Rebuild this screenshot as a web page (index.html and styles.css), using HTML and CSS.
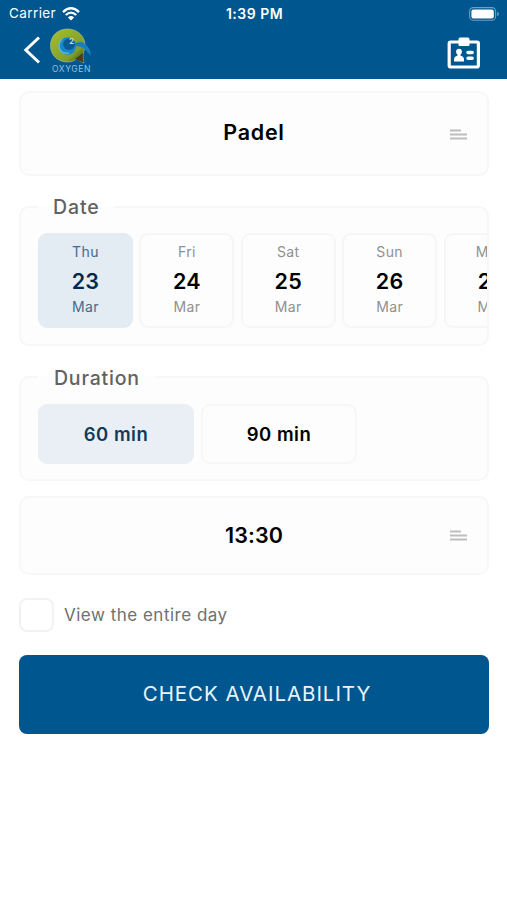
FILE: index.html
```html
<!DOCTYPE html>
<html lang="en">
<head>
<meta charset="utf-8">
<meta name="viewport" content="width=device-width, initial-scale=1">
<title>Book a court</title>
<link rel="stylesheet" href="styles.css">
</head>
<body>
<header class="header">
  <div class="status">
    <div class="carrier"><span class="carrier-name">Carrier</span>
      <svg width="18" height="14" viewBox="0 0 18 14" fill="none" stroke="#fff" stroke-width="2.3"><path d="M1 5.1Q9-2.5 17 5.1M3.8 8Q9 3.2 14.2 8"/><path d="M9 13.4L5.9 10.4Q9 7.8 12.1 10.4Z" fill="#fff" stroke="none"/></svg>
    </div>
    <span class="clock">1:39 PM</span>
    <svg class="battery" width="31" height="14" viewBox="0 0 31 14"><rect x=".6" y=".6" width="26" height="12.6" rx="3.8" fill="none" stroke="#6f9fc2" stroke-width="1.1"/><rect x="2.4" y="2.4" width="22.4" height="9" rx="2" fill="#fff"/><path d="M28.2 4.8Q30 5.6 30 7T28.2 9.2Z" fill="#6f9fc2"/></svg>
  </div>
  <div class="nav">
    <svg class="back" width="18" height="30" viewBox="0 0 18 30" fill="none" stroke="#fff" stroke-width="3"><path d="M16 2.5L2.8 15L16 27.5"/></svg>
    <div class="logo">
      <svg width="42" height="37" viewBox="0 0 42 37">
        <defs><linearGradient id="leaf" x1="0" y1="0" x2="1" y2="1"><stop offset="0" stop-color="#a9bd30"/><stop offset=".7" stop-color="#7f9f2b"/><stop offset="1" stop-color="#343f12"/></linearGradient></defs>
        <path d="M17.5 1C7.5 1 .5 8 .5 17.5S7.5 34 17.5 34C21 34 24 33 26.5 31L34 35Q32 28 33.5 24Q35 21 35 17.5C35 8 27.5 1 17.5 1Z" fill="url(#leaf)" stroke="#a7b98d" stroke-width=".7"/>
        <path d="M25 31L33.6 34.6Q32 29 33 25Z" fill="#4b3d1c"/>
        <circle cx="17.5" cy="18" r="8.7" fill="#1687c8"/>
        <path d="M12 11C6 18 10 27 19 25" fill="none" stroke="#5fb5dc" stroke-width="1.5"/>
        <circle cx="19" cy="16.2" r="5.8" fill="#07599a"/>
        <path d="M25 16Q31 11 36 17Q41 21 40.5 28Q36 21 31 19Q28 18 25 18Z" fill="#1680c2"/>
        <text x="21.5" y="16.2" class="logo-number">2</text>
      </svg>
      <span class="logo-name">OXYGEN</span>
    </div>
    <svg class="badge" width="34" height="33" viewBox="0 0 34 33"><rect x="2.2" y="5" width="29.2" height="25" rx="1.5" fill="none" stroke="#fff" stroke-width="3.2"/><path d="M13 0.5H21Q22.5 .5 22.5 2.5V8Q22.5 9 21.5 9H12.5Q11.5 9 11.5 8V2.5Q11.5 .5 13 .5Z" fill="#fff"/><circle cx="12" cy="14.7" r="2.9" fill="#fff"/><path d="M10.5 16H13.5V18.5Q17 19.5 17 22.5V24.5H7V22.5Q7 19.5 10.5 18.5Z" fill="#fff"/><path d="M21 15.5H25.2M21 21.3H25.2" stroke="#fff" stroke-width="3.4" stroke-linecap="round"/></svg>
  </div>
</header>
<main class="form">
  <div class="select sport"><span>Padel</span><svg class="lines" width="17" height="11" viewBox="0 0 17 11"><path d="M0 1.5H11M0 5.5H17M0 9.5H17"/></svg></div>
  <fieldset class="group dates">
    <legend>Date</legend>
    <div class="strip">
      <div class="day selected"><span>Thu</span><b>23</b><span>Mar</span></div>
      <div class="day"><span>Fri</span><b>24</b><span>Mar</span></div>
      <div class="day"><span>Sat</span><b>25</b><span>Mar</span></div>
      <div class="day"><span>Sun</span><b>26</b><span>Mar</span></div>
      <div class="day"><span>Mon</span><b>27</b><span>Mar</span></div>
    </div>
  </fieldset>
  <fieldset class="group durations">
    <legend>Duration</legend>
    <div class="options"><div class="option selected">60 min</div><div class="option">90 min</div></div>
  </fieldset>
  <div class="select time"><span>13:30</span><svg class="lines" width="17" height="11" viewBox="0 0 17 11"><path d="M0 1.5H11M0 5.5H17M0 9.5H17"/></svg></div>
  <label class="entire"><span class="check"></span><span class="entire-text">View the entire day</span></label>
  <button class="submit">CHECK AVAILABILITY</button>
</main>
</body>
</html>
```

FILE: styles.css
```css
* { box-sizing: border-box; }
body { margin: 0; background: #fff; font-family: Inter, sans-serif; color: #000; }
.header { height: 79px; background: #00568f; color: #fff; }
.status { height: 27px; display: grid; grid-template-columns: 1fr auto 1fr; align-items: center; padding: 0 7px 0 9px; font-size: 13px; }
.carrier { display: flex; align-items: center; gap: 6px; }
.carrier-name { font-size: 13.5px; letter-spacing: .4px; line-height: 27px; }
.clock { font-size: 14px; font-weight: 600; letter-spacing: .5px; }
.battery { justify-self: end; }
.nav { height: 52px; display: flex; align-items: flex-start; padding: 0 26px 0 23px; }
.back { margin-top: 8px; }
.logo { width: 42px; margin: 1px 0 0 9px; display: flex; flex-direction: column; }
.logo-number { font: bold 8px Inter, sans-serif; fill: #d8d99e; text-anchor: middle; }
.logo-name { font-size: 8.5px; line-height: 9px; letter-spacing: .6px; color: #9cc0d9; margin-left: 2px; }
.badge { margin: 10px 0 0 auto; }
.form { display: flex; flex-direction: column; padding: 12px 18px 0 19px; }
.select { border: 2px solid #f7f7f7; border-radius: 10px; background: #fdfdfd; display: grid; grid-template-columns: 1fr auto 1fr; align-items: center; font-size: 21.5px; font-weight: 600; padding: 0 20px; }
.select span { grid-column: 2; }
.sport { height: 85px; letter-spacing: .7px; }
.sport span { margin-bottom: 3px; }
.sport .lines { margin-top: 2px; }
.lines { justify-self: end; fill: none; stroke: #bdbdbd; stroke-width: 1.8; }
.group { min-width: 0; margin: 0; border: 2px solid #f7f7f7; border-radius: 10px; background: #fdfdfd; padding: 0 0 0 17px; }
legend { height: 26px; line-height: 26px; font-size: 19.5px; font-weight: 500; color: #626262; letter-spacing: .9px; padding: 0 15px 0 15px; }
.dates { height: 152px; margin-top: 18px; }
.strip { display: flex; gap: 6.4px; overflow: hidden; margin-top: 13px; }
.day { flex: 0 0 95px; height: 95px; border: 2px solid #f6f6f6; border-radius: 9px; display: flex; flex-direction: column; align-items: center; padding-top: 7px; font-size: 14px; line-height: 20px; color: #909090; letter-spacing: .4px; }
.day b { color: #000; font-size: 21.5px; font-weight: 600; line-height: 36px; letter-spacing: .3px; padding-top: 1px; }
.day b + span { margin-top: -2px; }
.day.selected { background: #e4ecf3; border-color: #e4ecf3; color: #426b8b; }
.day.selected b { color: #002a4c; }
.durations { height: 117px; margin-top: 18px; }
.durations legend { padding: 1px 16px 0; letter-spacing: .8px; }
.options { display: flex; gap: 7px; margin-top: 14px; }
.option { width: 156px; height: 60px; border: 2px solid #f7f7f7; border-radius: 9px; display: flex; align-items: center; justify-content: center; font-size: 18.5px; font-weight: 600; letter-spacing: .5px; padding-bottom: 1px; }
.option.selected { background: #e9eff5; border-color: #e9eff5; color: #123a59; }
.time { height: 79px; margin-top: 15px; letter-spacing: .1px; }
.time span { margin-bottom: 2px; }
.entire { display: flex; align-items: center; gap: 10px; height: 34px; margin-top: 23px; }
.check { width: 35px; height: 34px; border: 2px solid #f2f2f2; border-radius: 8px; background: #fff; }
.entire-text { color: #707070; font-size: 17px; letter-spacing: .5px; padding-bottom: 1px; }
.submit { height: 79px; margin: 23px 0 0; border: 0; border-radius: 8px; background: #00568f; color: #eaf4fc; font: 400 20.5px Inter, sans-serif; letter-spacing: .95px; padding: 0 0 2px 6px; }
```
